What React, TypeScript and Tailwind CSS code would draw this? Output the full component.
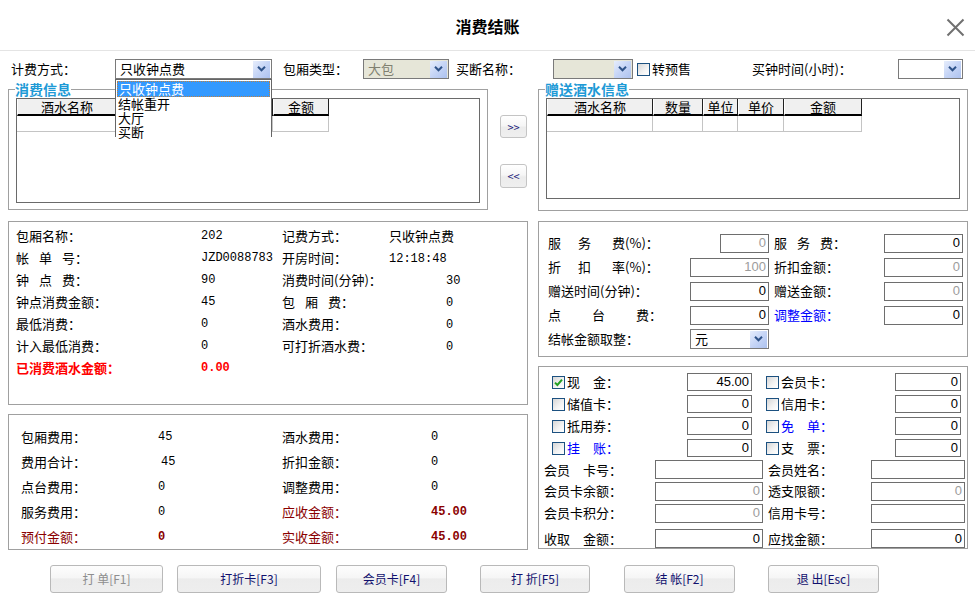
import React from 'react';

const MONO = "font-['Liberation_Mono',monospace] text-[12px]";

function DropBtn() {
  return (
    <span className="flex h-[17px] w-[17px] shrink-0 items-center justify-center bg-[linear-gradient(135deg,#e6edfc_0%,#c6d5f6_50%,#adc2ef_100%)]">
      <svg width="11" height="8" viewBox="0 0 11 8">
        <path d="M2 1.8 L5.5 5.3 L9 1.8" fill="none" stroke="#2f5389" strokeWidth="2" />
      </svg>
    </span>
  );
}

function Select({ className, value, muted }: { className: string; value?: string; muted?: boolean }) {
  return (
    <div className={`flex h-[20px] shrink-0 items-center border border-[#7a7a7a] pl-[4px] pr-[1px] ${className}`}>
      <span className={`flex-1 whitespace-nowrap leading-[16px] ${muted ? 'text-[#808070]' : 'text-black'}`}>{value}</span>
      <DropBtn />
    </div>
  );
}

function Check({ checked }: { checked?: boolean }) {
  return (
    <span className="flex h-[13px] w-[13px] shrink-0 items-center justify-center border border-[#1c5180] bg-[linear-gradient(135deg,#d6d6d6_0%,#f4f4f4_60%,#ffffff_100%)]">
      {checked && (
        <svg width="9" height="9" viewBox="0 0 9 9">
          <path d="M1 4.6 L3.4 7 L8 1.6" fill="none" stroke="#22a022" strokeWidth="2" />
        </svg>
      )}
    </span>
  );
}

function Field({ className, value, gray }: { className: string; value?: string; gray?: boolean }) {
  return (
    <div
      className={`flex shrink-0 items-center justify-end border border-[#6e6e6e] bg-white pr-[2px] font-['Liberation_Sans',sans-serif] text-[13px] leading-[14px] ${gray ? 'text-[#9c9c9c]' : 'text-black'} ${className}`}
    >
      {value}
    </div>
  );
}

function DrinkTable({ cols, className }: { cols: { name: string; w: string }[]; className: string }) {
  return (
    <div className={`border border-[#6a6a6a] bg-white ${className}`}>
      <div className="flex">
        {cols.map((c) => (
          <div
            key={c.name + c.w}
            className={`h-[17px] shrink-0 border-b-2 border-r border-l border-b-black border-r-[#202020] border-l-white bg-[#f0f0f0] text-center text-[13px] leading-[15px] ${c.w}`}
          >
            {c.name}
          </div>
        ))}
      </div>
      <div className="flex">
        {cols.map((c) => (
          <div key={c.name + c.w} className={`h-[16px] shrink-0 border-b border-r border-[#c4c4c4] ${c.w}`} />
        ))}
      </div>
    </div>
  );
}

function InfoRow({ l1, v1, l2, v2, wide }: { l1: React.ReactNode; v1: React.ReactNode; l2: React.ReactNode; v2: React.ReactNode; wide?: boolean }) {
  return (
    <div className="flex h-[22px] items-center leading-[16px]">
      <span className="w-[185px] shrink-0">{l1}</span>
      <span className={`w-[81px] shrink-0 ${MONO}`}>{v1}</span>
      <span className={`shrink-0 ${wide ? 'w-[164px]' : 'w-[107px]'}`}>{l2}</span>
      <span>{v2}</span>
    </div>
  );
}

function SumRow({ l1, v1, l2, v2 }: { l1: React.ReactNode; v1: React.ReactNode; l2: React.ReactNode; v2: React.ReactNode }) {
  return (
    <div className="flex h-[25px] items-center leading-[16px]">
      <span className="w-[137px] shrink-0">{l1}</span>
      <span className={`w-[124px] shrink-0 ${MONO}`}>{v1}</span>
      <span className="w-[149px] shrink-0">{l2}</span>
      <span className={MONO}>{v2}</span>
    </div>
  );
}

function Btn({ label, className, disabled }: { label: string; className: string; disabled?: boolean }) {
  return (
    <button
      className={`h-[28px] shrink-0 rounded-[3px] border border-[#b9b9b9] bg-[linear-gradient(to_bottom,#fdfdfd_0%,#f6f6f6_45%,#ececec_50%,#eeeeee_100%)] text-[12px] leading-[14px] ${disabled ? 'text-[#8e8e8e]' : 'text-[#10106e]'} ${className}`}
    >
      {label}
    </button>
  );
}

const leftCols = [
  { name: '酒水名称', w: 'w-[100px]' },
  { name: '数量', w: 'w-[50px]' },
  { name: '单位', w: 'w-[40px]' },
  { name: '单价', w: 'w-[66px]' },
  { name: '金额', w: 'w-[56px]' },
];

const rightCols = [
  { name: '酒水名称', w: 'w-[106px]' },
  { name: '数量', w: 'w-[50px]' },
  { name: '单位', w: 'w-[35px]' },
  { name: '单价', w: 'w-[46px]' },
  { name: '金额', w: 'w-[78px]' },
];

export default function App() {
  return (
    <div className="relative h-[602px] w-[975px] overflow-hidden bg-white font-['Noto_Sans_CJK_SC','Noto_Sans_CJK_JP',sans-serif] text-[13px] text-black">
      {/* title bar */}
      <div className="relative flex h-[51px] items-center justify-center border-b border-[#e4e4e4] pt-[2px]">
        <span className="text-[16px] font-bold leading-[20px]">消费结账</span>
        <svg className="absolute right-[10px] top-[18px]" width="19" height="19" viewBox="0 0 19 19">
          <path d="M1.5 1.5 L17.5 17.5 M17.5 1.5 L1.5 17.5" stroke="#707070" strokeWidth="2" />
        </svg>
      </div>

      {/* filter row */}
      <div className="relative z-20 mt-[8px] flex h-[20px] items-center pl-[11px] leading-[16px]">
        <span className="w-[104px] shrink-0">计费方式：</span>
        <div className="relative">
          <Select className="w-[157px] bg-white" value="只收钟点费" />
          <div className="absolute left-0 top-[20px] z-30 h-[58px] w-[157px] border border-[#666] bg-white leading-[14px]">
            <div className="mx-px mt-px border border-dotted border-[#c08040] bg-[#3399ff] pl-px text-white">只收钟点费</div>
            <div className="bg-white pl-[2px]">结帐重开</div>
            <div className="bg-white pl-[2px]">大厅</div>
            <div className="bg-white pl-[2px]">买断</div>
          </div>
        </div>
        <span className="ml-[11px] w-[80px] shrink-0">包厢类型：</span>
        <Select className="w-[86px] bg-[#e6e6d8]" value="大包" muted />
        <span className="ml-[7px] w-[97px] shrink-0">买断名称：</span>
        <Select className="w-[80px] bg-[#e6e6d8]" />
        <span className="ml-[4px]">
          <Check />
        </span>
        <span className="ml-[2px] w-[100px] shrink-0">转预售</span>
        <span className="w-[146px] shrink-0">买钟时间(小时)：</span>
        <Select className="w-[65px] bg-white" />
      </div>

      {/* drink groups */}
      <div className="mt-[3px] flex pl-[8px]">
        <fieldset className="m-0 h-[128px] w-[480px] shrink-0 border border-[#a0a0a0] p-0">
          <legend className="ml-[6px] p-0 text-[14px] font-bold leading-[14px] text-[#1e9ad6]">消费信息</legend>
          <DrinkTable cols={leftCols} className="ml-[7px] mt-[2px] h-[105px] w-[464px]" />
        </fieldset>
        <div className="flex w-[50px] shrink-0 flex-col pl-[12px] pt-[33px]">
          <button className="flex h-[23px] w-[27px] items-center justify-center rounded-[3px] border border-[#c4c4c4] bg-[linear-gradient(to_bottom,#ffffff_0%,#f6f6f6_45%,#ececec_55%,#efefef_100%)] text-[11px] leading-[12px] text-[#1a1a7a]">
            &gt;&gt;
          </button>
          <button className="mt-[26px] flex h-[24px] w-[27px] items-center justify-center rounded-[3px] border border-[#c4c4c4] bg-[linear-gradient(to_bottom,#ffffff_0%,#f6f6f6_45%,#ececec_55%,#efefef_100%)] text-[11px] leading-[12px] text-[#1a1a7a]">
            &lt;&lt;
          </button>
        </div>
        <fieldset className="m-0 h-[129px] w-[430px] shrink-0 border border-[#a0a0a0] p-0">
          <legend className="ml-[6px] p-0 text-[14px] font-bold leading-[14px] text-[#1e9ad6]">赠送酒水信息</legend>
          <DrinkTable cols={rightCols} className="ml-[7px] mt-[2px] h-[101px] w-[414px]" />
        </fieldset>
      </div>

      {/* info panels */}
      <div className="mt-[10px] flex gap-[10px] pl-[8px]">
        <div className="flex w-[520px] shrink-0 flex-col gap-[9px]">
          <div className="h-[184px] border border-[#a0a0a0] pl-[7px] pt-[3px]">
            <InfoRow l1="包厢名称：" v1="202" l2="记费方式：" v2="只收钟点费" />
            <InfoRow
              l1={<><span className="tracking-[10px]">帐单</span>号：</>}
              v1="JZD0088783"
              l2="开房时间："
              v2={<span className={MONO}>12:18:48</span>}
            />
            <InfoRow
              l1={<><span className="tracking-[10px]">钟点</span>费：</>}
              v1="90"
              l2="消费时间(分钟)："
              v2={<span className={MONO}>30</span>}
              wide
            />
            <InfoRow
              l1="钟点消费金额："
              v1="45"
              l2={<><span className="tracking-[10px]">包厢</span>费：</>}
              v2={<span className={MONO}>0</span>}
              wide
            />
            <InfoRow l1="最低消费：" v1="0" l2="酒水费用：" v2={<span className={MONO}>0</span>} wide />
            <InfoRow l1="计入最低消费：" v1="0" l2="可打折酒水费：" v2={<span className={MONO}>0</span>} wide />
            <div className="flex h-[22px] items-center font-bold leading-[16px] text-[#ff0000]">
              <span className="w-[185px] shrink-0">已消费酒水金额：</span>
              <span className={`${MONO} font-bold`}>0.00</span>
            </div>
          </div>
          <div className="h-[136px] border border-[#a0a0a0] pl-[12px] pt-[9px]">
            <SumRow l1="包厢费用：" v1="45" l2="酒水费用：" v2="0" />
            <SumRow l1="费用合计：" v1={<span className="pl-[3px]">45</span>} l2="折扣金额：" v2="0" />
            <SumRow l1="点台费用：" v1="0" l2="调整费用：" v2="0" />
            <SumRow
              l1="服务费用："
              v1="0"
              l2={<span className="text-[#8a0000]">应收金额：</span>}
              v2={<span className="font-bold text-[#8a0000]">45.00</span>}
            />
            <SumRow
              l1={<span className="text-[#8a0000]">预付金额：</span>}
              v1={<span className="font-bold text-[#8a0000]">0</span>}
              l2={<span className="text-[#8a0000]">实收金额：</span>}
              v2={<span className="font-bold text-[#8a0000]">45.00</span>}
            />
          </div>
        </div>

        <div className="flex w-[430px] shrink-0 flex-col gap-[9px]">
          <div className="h-[136px] border border-[#a0a0a0] pl-[9px] pt-[9px] leading-[16px]">
            <div className="flex h-[24px] items-center">
              <span className="w-[142px] shrink-0">
                <span className="tracking-[17px]">服</span>
                <span className="tracking-[21px]">务</span>费(%)：
              </span>
              <div className="flex w-[79px] shrink-0 justify-end">
                <Field className="h-[19px] w-[49px]" value="0" gray />
              </div>
              <span className="ml-[5px] w-[110px] shrink-0">
                <span className="tracking-[10px]">服务</span>费：
              </span>
              <Field className="h-[19px] w-[79px]" value="0" />
            </div>
            <div className="flex h-[24px] items-center">
              <span className="w-[142px] shrink-0">
                <span className="tracking-[17px]">折</span>
                <span className="tracking-[21px]">扣</span>率(%)：
              </span>
              <Field className="h-[19px] w-[79px]" value="100" gray />
              <span className="ml-[5px] w-[110px] shrink-0">折扣金额：</span>
              <Field className="h-[19px] w-[79px]" value="0" gray />
            </div>
            <div className="flex h-[24px] items-center">
              <span className="w-[142px] shrink-0">赠送时间(分钟)：</span>
              <Field className="h-[19px] w-[79px]" value="0" />
              <span className="ml-[5px] w-[110px] shrink-0">赠送金额：</span>
              <Field className="h-[19px] w-[79px]" value="0" gray />
            </div>
            <div className="flex h-[24px] items-center">
              <span className="w-[142px] shrink-0">
                <span className="tracking-[31px]">点台</span>费：
              </span>
              <Field className="h-[19px] w-[79px]" value="0" />
              <span className="ml-[5px] w-[110px] shrink-0 text-[#0000ff]">调整金额：</span>
              <Field className="h-[19px] w-[79px]" value="0" />
            </div>
            <div className="flex h-[24px] items-center">
              <span className="w-[142px] shrink-0">结帐金额取整：</span>
              <Select className="w-[79px] bg-white" value="元" />
            </div>
          </div>

          <div className="h-[183px] border border-[#a0a0a0] pt-[4px] leading-[16px]">
            {[
              { a: '现\u3000金：', av: '45.00', ac: true, b: '会员卡：', bv: '0' },
              { a: '储值卡：', av: '0', b: '信用卡：', bv: '0' },
              { a: '抵用券：', av: '0', b: '免\u3000单：', bv: '0', bBlue: true },
              { a: '挂\u3000账：', av: '0', aBlue: true, b: '支\u3000票：', bv: '0' },
            ].map((r) => (
              <div key={r.a} className="flex h-[22px] items-center pl-[13px]">
                <Check checked={r.ac} />
                <span className={`ml-[2px] w-[120px] shrink-0 ${r.aBlue ? 'text-[#0000ff]' : ''}`}>{r.a}</span>
                <Field className="h-[18px] w-[65px]" value={r.av} />
                <span className="ml-[14px]">
                  <Check />
                </span>
                <span className={`ml-[2px] w-[114px] shrink-0 ${r.bBlue ? 'text-[#0000ff]' : ''}`}>{r.b}</span>
                <Field className="h-[18px] w-[66px]" value={r.bv} />
              </div>
            ))}
            <div className="flex h-[21px] items-center pl-[5px]">
              <span className="w-[111px] shrink-0">会员{'\u3000'}卡号：</span>
              <Field className="h-[19px] w-[108px]" />
              <span className="ml-[5px] w-[103px] shrink-0">会员姓名：</span>
              <Field className="h-[19px] w-[94px]" />
            </div>
            <div className="flex h-[22px] items-center pl-[5px]">
              <span className="w-[111px] shrink-0">会员卡余额：</span>
              <Field className="h-[19px] w-[108px]" value="0" gray />
              <span className="ml-[5px] w-[103px] shrink-0">透支限额：</span>
              <Field className="h-[19px] w-[94px]" value="0" gray />
            </div>
            <div className="flex h-[22px] items-center pl-[5px]">
              <span className="w-[111px] shrink-0">会员卡积分：</span>
              <Field className="h-[19px] w-[108px]" value="0" gray />
              <span className="ml-[5px] w-[103px] shrink-0">信用卡号：</span>
              <Field className="h-[19px] w-[94px]" />
            </div>
            <div className="flex h-[26px] items-center pl-[5px] pt-[3px]">
              <span className="w-[111px] shrink-0">收取{'\u3000'}金额：</span>
              <Field className="h-[19px] w-[108px]" value="0" />
              <span className="ml-[5px] w-[103px] shrink-0">应找金额：</span>
              <Field className="h-[19px] w-[94px]" value="0" />
            </div>
          </div>
        </div>
      </div>

      {/* action buttons */}
      <div className="mt-[15px] flex pl-[50px]">
        <Btn className="w-[113px]" label="打 单[F1]" disabled />
        <Btn className="ml-[14px] w-[144px]" label="打折卡[F3]" />
        <Btn className="ml-[15px] w-[111px]" label="会员卡[F4]" />
        <Btn className="ml-[33px] w-[110px]" label="打 折[F5]" />
        <Btn className="ml-[34px] w-[111px]" label="结 帐[F2]" />
        <Btn className="ml-[33px] w-[111px]" label="退 出[Esc]" />
      </div>
    </div>
  );
}
